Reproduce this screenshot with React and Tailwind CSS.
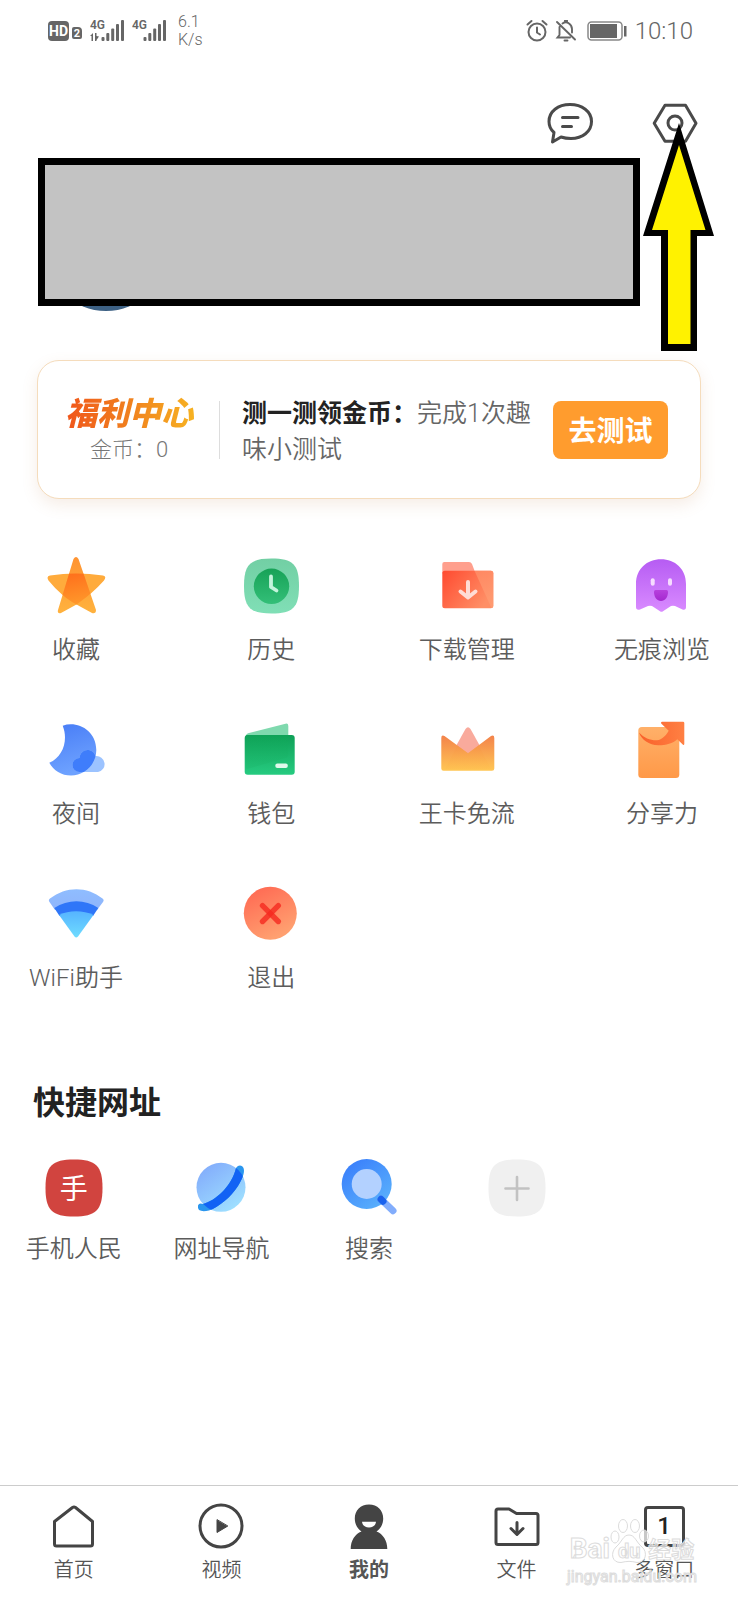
import React, { useState } from "react";

const Grad = ({ id, from, to, x2 = 0, y2 = 1 }) => (
  <linearGradient id={id} x1="0" y1="0" x2={x2} y2={y2}>
    <stop offset="0" stopColor={from} />
    <stop offset="1" stopColor={to} />
  </linearGradient>
);

const Icon = ({ children }) => (
  <svg className="size-[60px]" viewBox="0 0 60 60" fill="none" aria-hidden="true">
    {children}
  </svg>
);

const StarIcon = () => (
  <Icon>
    <defs>
      <Grad id="starA" from="#ff9331" to="#ffb23e" />
      <Grad id="starB" from="#ff6a1a" to="#ff962a" x2={0.4} />
      <clipPath id="starClip">
        <path d="M27.5 3Q30 -1 32.5 3L50 54Q50 58 46 57L30.5 48.5 15 57Q11 58 12 54Z" />
      </clipPath>
    </defs>
    <path fill="#ffab3c" d="M2.500 24.500Q0 20 4 19.500Q30 15.500 57 19.500Q61 20.500 58 24.500Q46 38 30.500 48.500Q15 40 2.500 24.500Z" />
    <path fill="url(#starA)" d="M27.5 3Q30 -1 32.5 3L50 54Q50 58 46 57L30.5 48.5 15 57Q11 58 12 54Z" />
    <path
      clipPath="url(#starClip)"
      fill="url(#starB)"
      d="M2.500 24.500Q0 20 4 19.500Q30 15.500 57 19.500Q61 20.500 58 24.500Q46 38 30.500 48.500Q15 40 2.500 24.500Z"
    />
  </Icon>
);

const HistoryIcon = () => (
  <Icon>
    <defs>
      <Grad id="histA" from="#72cfa4" to="#80dfb6" />
      <Grad id="histB" from="#17a257" to="#33bf78" />
    </defs>
    <path fill="url(#histA)" d="M30.500 2.500C52 2.500 58 8.500 58 30S52 57.500 30.500 57.500 3 51.500 3 30 9 2.500 30.500 2.500Z" />
    <circle cx="30.500" cy="30.300" r="17.700" fill="url(#histB)" />
    <path d="M30 20.500V31L35.500 34.500" stroke="#c4f4dc" strokeWidth="3.800" strokeLinecap="round" strokeLinejoin="round" />
  </Icon>
);

const DownloadIcon = () => (
  <Icon>
    <defs>
      <Grad id="dlA" from="#ff4a30" to="#ff8f66" x2={1} y2={0.6} />
      <Grad id="dlB" from="#ff8f68" to="#ff9e74" />
    </defs>
    <path fill="#ff9f8d" d="M5.300 17V8Q5.300 6 7.300 6H32Q34 6 35 8L38 16Z" />
    <rect x="5.300" y="14.700" width="51" height="37.500" rx="2.500" fill="url(#dlA)" />
    <path fill="url(#dlB)" opacity="0.8" d="M37.500 14.700H54Q56.300 14.700 56.300 17V50Q56 52 54.500 52Z" />
    <path d="M31 26V41M23.500 35.500 31 41.500 38.500 35.500" stroke="#ffdcd5" strokeWidth="4" strokeLinecap="round" strokeLinejoin="round" />
  </Icon>
);

const GhostIcon = () => (
  <Icon>
    <defs>
      <Grad id="ghA" from="#b65cf3" to="#d98bff" />
      <Grad id="ghB" from="#b741dd" to="#a428cf" />
    </defs>
    <path
      fill="url(#ghA)"
      d="M4 28C4 13 15 3.300 29 3.300S54 13 54 28V51Q54 54.500 50.500 53.500L43 50Q41 49.300 39 50L31 55.300Q29.500 56.300 28 55.300L20 50Q18 49.300 16 50L8 53.500Q4 54.500 4 51Z"
    />
    <rect x="18.700" y="22.300" width="4" height="7.400" rx="2" fill="#f6dcff" />
    <rect x="36" y="22.300" width="4" height="7.400" rx="2" fill="#f6dcff" />
    <path fill="url(#ghB)" d="M23.500 34H34.500Q36 34 36 35.500C36 41.500 33 45 29 45S22 41.500 22 35.500Q22 34 23.500 34Z" />
  </Icon>
);

const MOON = "M16.700 5.700C31 0.500 50.300 10 50.300 30 50.300 44 39 55.500 25 55.500 15.500 55.500 7.500 50.500 3.300 42.700 17 37 22.500 20 16.700 5.700Z";
const CLOUD = "M33.500 52A7 7 0 0 1 33.500 38C34 33 37.500 30 41.500 30 45.500 30 48.500 32.500 49.500 36.200A8 8 0 0 1 52 52Z";

const MoonIcon = () => (
  <Icon>
    <defs>
      <Grad id="mnA" from="#477cf6" to="#6ea2ff" x2={0.3} />
      <clipPath id="moonClip">
        <path d={MOON} />
      </clipPath>
    </defs>
    <path fill="url(#mnA)" d={MOON} />
    <path fill="#9cc3ff" d={CLOUD} />
    <path fill="#3f7dfb" d={CLOUD} clipPath="url(#moonClip)" />
  </Icon>
);

const WalletIcon = () => (
  <Icon>
    <defs>
      <Grad id="wlA" from="#0fa057" to="#26cb80" />
      <Grad id="wlB" from="#0fa457" to="#1fbd72" />
    </defs>
    <path fill="#7fd9ae" d="M5 16Q5 14 7 13.300L44.500 3.700Q47.300 3 47.300 6V18H5Z" />
    <rect x="3.700" y="15" width="50" height="39.700" rx="3" fill="url(#wlA)" />
    <path fill="url(#wlB)" opacity="0.6" d="M5 15H47.300V34Q47.300 37 44.500 38L6 49Q5 49 5 47Z" />
    <rect x="34.300" y="43.500" width="12.500" height="4.500" rx="2" fill="#dff9ec" />
  </Icon>
);

const CrownIcon = () => (
  <Icon>
    <defs>
      <Grad id="crA" from="#f3834b" to="#ffc654" />
      <Grad id="crB" from="#ee6c40" to="#ffc050" />
      <clipPath id="crownClip">
        <path d="M31 33.300 55 16 57.300 50H4.300L7 16Z" />
      </clipPath>
    </defs>
    <path fill="#f9aa9c" d="M28.500 9Q31 5.500 33.500 9L43 26 31 34 19 26Z" />
    <path fill="url(#crA)" d="M4.300 18Q4.300 14.500 7.500 16L31 33.300 54 16Q57.300 14.500 57.300 18V48.500Q57.300 50.700 55 50.700H6.500Q4.300 50.700 4.300 48.500Z" />
    <path fill="url(#crB)" opacity="0.6" clipPath="url(#crownClip)" d="M31 5 54 49H8Z" />
  </Icon>
);

const ShareIcon = () => (
  <Icon>
    <defs>
      <Grad id="shA" from="#ffb069" to="#ff9948" />
      <Grad id="shB" from="#f9602a" to="#ff8043" x2={1} y2={0} />
    </defs>
    <rect x="6.300" y="7" width="41" height="51" rx="3.500" fill="url(#shA)" />
    <path
      fill="url(#shB)"
      d="M30 1.700H51Q52.300 1.700 52.300 3V24Q52 25.500 51 24.700L45.300 19.300C41 23.500 34 25.300 26.300 25.300 17 25 9.500 20 7 12.500 12 18 18.500 20.500 25 20.300 30 19.500 34 15.500 36.700 10.700L29.200 3.500Q28.500 2 30 1.700Z"
    />
  </Icon>
);

const WifiIcon = () => (
  <Icon>
    <defs>
      <Grad id="wfA" from="#8fbdff" to="#8fb4fb" />
      <Grad id="wfB" from="#56b4ff" to="#6fdcff" />
    </defs>
    <path fill="url(#wfA)" d="M3.500 18Q2 16 4 14.500C20 2 41 2 56.500 14.500Q58.500 16 57 18L51 26H9Z" />
    <path fill="#2f76f8" d="M8.300 24C22 15 39 15 52.300 24L47 32H13.500Z" />
    <path fill="url(#wfB)" d="M13 31C23 26 37 26 47.500 31L32 52.500Q30.200 54.500 28.500 52.500Z" />
  </Icon>
);

const ExitIcon = () => (
  <Icon>
    <defs>
      <Grad id="exA" from="#ff6450" to="#ffa070" x2={0.5} />
    </defs>
    <circle cx="29.300" cy="29.300" r="26.500" fill="url(#exA)" />
    <path d="M21.500 21.700 37.300 37.500" stroke="#f5291f" strokeOpacity="0.8" strokeWidth="5.400" strokeLinecap="round" />
    <path d="M37.300 21.700 21.500 37.500" stroke="#f5291f" strokeOpacity="0.8" strokeWidth="5.400" strokeLinecap="round" />
  </Icon>
);

const RING = "M7 47.500Q8 44.500 12 46C24 43 41 28 45 10Q48 6 51.500 8.500C55 12 52 20 47 28 40 39 28 49 18 52.500Q11 54 8 52Q6.500 50 7 47.500Z";

const PlanetIcon = () => (
  <Icon>
    <defs>
      <Grad id="plA" from="#7fa6fb" to="#9fe0ff" x2={0.7} />
      <clipPath id="planetClip">
        <circle cx="30" cy="29.300" r="24.500" />
      </clipPath>
    </defs>
    <circle cx="30" cy="29.300" r="24.500" fill="url(#plA)" />
    <path fill="#2a96ee" d={RING} />
    <path fill="#1262f4" d={RING} clipPath="url(#planetClip)" />
  </Icon>
);

const SearchIcon = () => (
  <Icon>
    <defs>
      <Grad id="seA" from="#3679fb" to="#5bb2fc" x2={0.8} />
    </defs>
    <circle cx="27.700" cy="26" r="25" fill="url(#seA)" />
    <circle cx="27.700" cy="26" r="15" fill="#b3d1ff" />
    <path d="M42 41.300 54 52.700" stroke="#82adfc" strokeWidth="7" strokeLinecap="round" />
    <path d="M42 41.300 44 43.200" stroke="#1a62ee" strokeWidth="7" strokeLinecap="round" />
  </Icon>
);

const SQUIRCLE = "M30 1.500C52 1.500 58.500 8 58.500 30S52 58.500 30 58.500 1.500 52 1.500 30 8 1.500 30 1.500Z";

const PeopleIcon = () => (
  <span className="grid size-[60px] place-items-center">
    <span className="col-start-1 row-start-1">
      <Icon>
        <path fill="#d1443f" d={SQUIRCLE} />
      </Icon>
    </span>
    <span className="z-10 col-start-1 row-start-1 pt-1 text-[28px] leading-none text-white">手</span>
  </span>
);

const AddIcon = () => (
  <Icon>
    <path fill="#f0f0f0" d={SQUIRCLE} />
    <path d="M30 19V42M18.500 30.500H41.500" stroke="#c2c2c2" strokeWidth="2.600" strokeLinecap="round" />
  </Icon>
);

const features = [
  { label: "收藏", icon: StarIcon },
  { label: "历史", icon: HistoryIcon },
  { label: "下载管理", icon: DownloadIcon },
  { label: "无痕浏览", icon: GhostIcon },
  { label: "夜间", icon: MoonIcon },
  { label: "钱包", icon: WalletIcon },
  { label: "王卡免流", icon: CrownIcon },
  { label: "分享力", icon: ShareIcon },
  { label: "WiFi助手", icon: WifiIcon },
  { label: "退出", icon: ExitIcon },
];

const sites = [
  { label: "手机人民", icon: PeopleIcon },
  { label: "网址导航", icon: PlanetIcon },
  { label: "搜索", icon: SearchIcon },
];

const NavSvg = ({ children }) => (
  <svg
    className="size-12"
    viewBox="0 0 48 48"
    fill="none"
    stroke="#444"
    strokeWidth="3"
    strokeLinecap="round"
    strokeLinejoin="round"
    aria-hidden="true"
  >
    {children}
  </svg>
);

const tabs = [
  {
    label: "首页",
    icon: (
      <NavSvg>
        <path d="M4.500 19.500 22.500 5.500Q24 4.500 25.500 5.500L42.500 19.500V42Q42.500 44 40.500 44H6.500Q4.500 44 4.500 42Z" />
      </NavSvg>
    ),
  },
  {
    label: "视频",
    icon: (
      <NavSvg>
        <circle cx="24" cy="24" r="21" />
        <path fill="#444" strokeWidth="1" d="M20 18V30.500L30.500 24.200Z" />
      </NavSvg>
    ),
  },
  {
    label: "我的",
    icon: (
      <NavSvg>
        <path
          fill="#444"
          stroke="none"
          d="M24 2.500C32.500 2.500 38.200 8.500 38.200 16.500 38.200 22.500 35.500 26.500 31.500 29.500 38 32 42.300 38.500 42.300 47H5.700C5.700 38.500 10 32 16.500 29.500 12.500 26.500 9.800 22.500 9.800 16.500 9.800 8.500 15.500 2.500 24 2.500Z"
        />
        <path fill="#fff" stroke="none" d="M17 19.700H31C30.500 23.500 28 25.500 24 25.500S17.500 23.500 17 19.700Z" />
      </NavSvg>
    ),
  },
  {
    label: "文件",
    icon: (
      <NavSvg>
        <path d="M3 9Q3 7 5 7H16L23.500 11.500H43Q45 11.500 45 13.500V40.500Q45 42.500 43 42.500H5Q3 42.500 3 40.500Z" />
        <path d="M24 20.500V32M18 26.500 24 32.500 30 26.500" />
      </NavSvg>
    ),
  },
  {
    label: "多窗口",
    icon: (
      <span className="flex size-12 items-center justify-center">
        <span className="flex size-[41px] items-center justify-center rounded-sm border-3 border-[#444] text-2xl leading-none font-medium text-[#222]">
          1
        </span>
      </span>
    ),
  },
];

const Signal = ({ data }) => (
  <svg className="h-6 w-9" viewBox="0 0 36 24" fill="#666" aria-hidden="true">
    <text x="0" y="10" fontSize="12" fontWeight="600" fontFamily="Roboto, sans-serif">
      4G
    </text>
    {data && <path d="M0 17 3 14V22H1.500V17ZM5 14H6.500V17L9 17.500 6.500 21V22H5Z" />}
    <rect x="11.500" y="18" width="3" height="4" rx="1" />
    <rect x="16.300" y="14" width="3" height="8" rx="1" />
    <rect x="21.200" y="9.500" width="3" height="12.500" rx="1" />
    <rect x="26" y="5" width="3" height="17" rx="1" />
    <rect x="31" y="1" width="3" height="21" rx="1" />
  </svg>
);

const StatusBar = () => (
  <div className="flex h-[62px] items-center justify-between pr-[45px] pl-12 text-[#666]">
    <div className="flex items-center">
      <span className="flex h-5 w-[21px] items-center justify-center rounded-sm bg-[#666] text-[14px] leading-none font-bold text-white">
        HD
      </span>
      <span className="mt-1 mr-2 ml-[3px] flex h-3 w-[10px] items-center justify-center rounded-xs rounded-tr-sm bg-[#666] text-[11px] leading-none font-bold text-white">
        2
      </span>
      <Signal data />
      <span className="w-[6px]" />
      <Signal />
      <span className="ml-[10px] text-[16px] leading-[18px] font-light">
        6.1
        <br />
        K/s
      </span>
    </div>
    <div className="flex items-center">
      <svg className="h-6 w-[22px]" viewBox="0 0 22 24" fill="none" stroke="#666" strokeWidth="2" strokeLinecap="round" aria-hidden="true">
        <circle cx="11" cy="13" r="8.500" />
        <path d="M11 8.500V13.500L14 15.500M1.500 5.500 5.500 2M20.500 5.500 16.500 2" />
      </svg>
      <svg className="ml-[7px] h-6 w-[22px]" viewBox="0 0 22 24" fill="none" stroke="#666" strokeWidth="1.900" strokeLinecap="round" aria-hidden="true">
        <path d="M2 3 20 20.500M4.500 8V16L2.500 18.500H15M7.500 4.500Q11 2 14 4.500 17 6.500 17 10V13.500M10 3V2H12V3M9.500 21.500H12.500" />
      </svg>
      <svg className="ml-[10px] h-6 w-10" viewBox="0 0 40 24" fill="none" aria-hidden="true">
        <rect x="1" y="3" width="34" height="18" rx="3.500" stroke="#888" strokeWidth="1.500" />
        <rect x="3" y="5" width="27" height="14" fill="#666" />
        <rect x="37" y="7" width="2.500" height="10.500" fill="#666" />
      </svg>
      <span className="ml-2 text-[24px] leading-8 font-light">10:10</span>
    </div>
  </div>
);

const Profile = () => (
  <section className="relative">
    <div className="flex justify-end gap-[57px] pt-[37px] pr-[39px]">
      <button type="button" aria-label="消息">
        <svg className="size-12" viewBox="0 0 48 48" fill="none" stroke="#4a4a4a" strokeWidth="3" strokeLinecap="round" strokeLinejoin="round">
          <path d="M6.500 43 8 33.500C4.500 30.500 3 27 3 22.500 3 12.500 12 5.500 24 5.500S45.500 12.500 45.500 22.500 36.500 39.500 25 39.500Q19.500 39.500 15 38Z" />
          <path d="M16.500 18.500H32M16.500 27.500H25.500" />
        </svg>
      </button>
      <button type="button" aria-label="设置">
        <svg className="size-12" viewBox="0 0 48 48" fill="none" stroke="#4a4a4a" strokeWidth="3" strokeLinejoin="round">
          <path d="M14 6.300H34.500L45 24.300 34.500 42.300H14L3.200 24.300Z" />
          <circle cx="24" cy="24" r="7" />
        </svg>
      </button>
    </div>
    {/* avatar, mostly hidden behind the cover block */}
    <div className="absolute bottom-[-5px] left-[46px] size-[120px] rounded-full bg-[#3d6184]" />
    <div className="relative mt-[11px] mr-[98px] ml-[38px] h-[148px] border-7 border-black bg-[#c3c3c3]" />
    <svg className="absolute top-[61px] right-6 h-[228px] w-[72px]" viewBox="0 0 72 228" aria-hidden="true">
      <path fill="#000" d="M37 0 72 113H55V228H19V113H1Z" />
      <path fill="#fff200" d="M37 22 63.500 107H48.500V221H26V107H10Z" />
    </svg>
  </section>
);

const WelfareCard = () => (
  <section className="mx-[37px] mt-[54px] flex h-[139px] items-center rounded-[22px] border border-[#f5dcbc] bg-white pr-8 pl-6 shadow-[0_6px_16px_rgba(190,130,80,0.14)]">
    <div className="flex w-[134px] flex-col items-center pt-[5px]">
      <span className="bg-linear-to-r from-[#f04e1a] via-[#f0801e] to-[#f7b722] bg-clip-text px-2 text-[32px] leading-9 font-black whitespace-nowrap text-transparent italic">
        福利中心
      </span>
      <span className="text-[22px] leading-9 font-light text-[#777]">金币：0</span>
    </div>
    <div className="ml-[23px] h-[58px] w-px bg-[#ddd]" />
    <p className="ml-[22px] flex-1 pt-[5px] text-[25px] leading-9 font-[350] text-[#666]">
      <b className="font-bold text-[#222]">测一测领金币：</b>
      完成1次趣味小测试
    </p>
    <button type="button" className="ml-5 h-[58px] w-[115px] shrink-0 rounded-lg bg-[#ff9c2e] pt-1 text-[28px] leading-9 font-bold text-white">
      去测试
    </button>
  </section>
);

const Watermark = () => (
  <div className="pointer-events-none absolute right-10 bottom-[13px] flex w-[132px] flex-col items-center whitespace-nowrap text-white/70 [-webkit-text-stroke:1px_#dcdcdc]">
    <svg className="absolute -top-4 left-[42px] h-12 w-[42px]" viewBox="0 0 42 48" fill="#fff" fillOpacity="0.7" stroke="#dcdcdc" aria-hidden="true">
      <ellipse cx="7" cy="20" rx="4" ry="6" />
      <ellipse cx="15" cy="9" rx="4.500" ry="6.500" />
      <ellipse cx="27" cy="9" rx="4.500" ry="6.500" />
      <ellipse cx="36" cy="19" rx="4.500" ry="6" />
      <path d="M21 18C27 18 28 25 34 30 40 35 38 46 29 45.500 23 44 19 44 13 45.500 4 46 2 36 8 30 14 25 15 18 21 18Z" />
    </svg>
    <span className="relative flex items-baseline leading-8">
      <span className="text-[28px] font-bold">Bai</span>
      <span className="mx-2 text-[20px] font-bold">du</span>
      <span className="text-[23px] font-bold">经验</span>
    </span>
    <span className="text-[16px] leading-5">jingyan.baidu.com</span>
  </div>
);

const App = () => {
  const [activeTab, setActiveTab] = useState("我的");

  return (
    <div className="relative flex min-h-screen flex-col bg-white font-['Roboto','Noto_Sans_CJK_SC',sans-serif]">
      <StatusBar />
      <Profile />
      <WelfareCard />

      <section className="mt-[57px] grid grid-cols-[repeat(4,100px)] justify-between gap-y-[53px] px-[26px]">
        {features.map(({ label, icon: FeatureIcon }) => (
          <button key={label} type="button" className="flex flex-col items-center gap-[17px]">
            <FeatureIcon />
            <span className="text-[24px] leading-[34px] font-[350] whitespace-nowrap text-[#5c5c5c]">{label}</span>
          </button>
        ))}
      </section>

      <section className="mt-[88px] mb-10">
        <h2 className="px-[33px] text-[32px] leading-10 font-bold text-[#222]">快捷网址</h2>
        <div className="mt-[35px] grid grid-cols-5">
          {sites.map(({ label, icon: SiteIcon }) => (
            <a key={label} href="#" className="flex flex-col items-center gap-[14px]">
              <SiteIcon />
              <span className="text-[24px] leading-[34px] font-[350] whitespace-nowrap text-[#5c5c5c]">{label}</span>
            </a>
          ))}
          <button type="button" aria-label="添加" className="flex flex-col items-center">
            <AddIcon />
          </button>
        </div>
      </section>

      <nav className="mt-auto grid grid-cols-5 border-t border-[#ccc] pt-4 pb-4">
        {tabs.map(({ label, icon }) => (
          <button
            key={label}
            type="button"
            onClick={() => setActiveTab(label)}
            className={`flex flex-col items-center gap-[6px] text-[20px] leading-7 text-[#555] ${
              activeTab === label ? "font-bold" : "font-[350]"
            }`}
          >
            {icon}
            <span>{label}</span>
          </button>
        ))}
      </nav>
      <Watermark />
    </div>
  );
};

export default App;
